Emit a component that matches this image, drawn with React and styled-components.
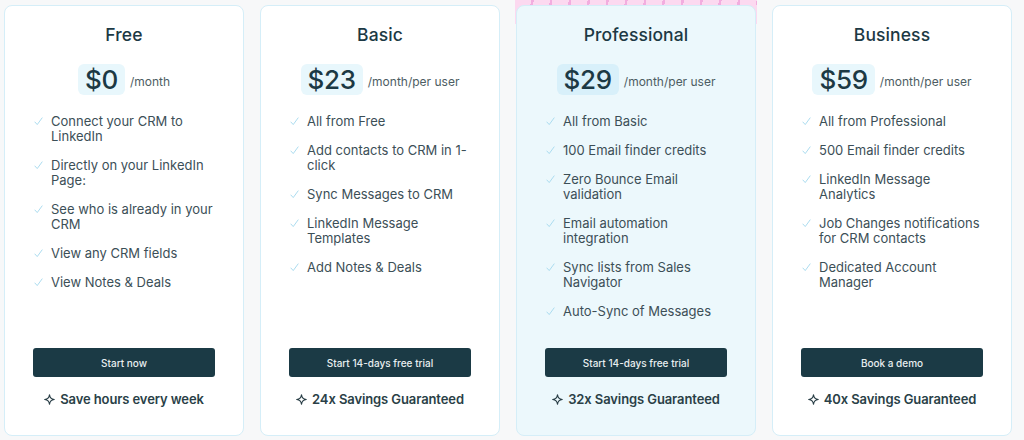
import React from 'react';
import styled, { createGlobalStyle, css } from 'styled-components';

const GlobalStyle = createGlobalStyle`
  html, body {
    margin: 0;
    padding: 0;
    background: #f7f8f9;
    font-family: Inter, "Noto Sans", sans-serif;
    -webkit-font-smoothing: antialiased;
  }
`;

const Plans = styled.section`
  display: grid;
  grid-template-columns: repeat(4, 240px);
  gap: 16px;
  padding: 0 0 0 4px;
  height: 440px;
  box-sizing: border-box;
`;

const Column = styled.div`
  position: relative;
  padding: 5px 0 4px;
  display: flex;

  ${({ $featured }) =>
    $featured &&
    css`
      &::before {
        content: '';
        position: absolute;
        top: 0;
        left: -1px;
        right: -1px;
        height: 24px;
        background:
          repeating-linear-gradient(
            100deg,
            transparent 0 16px,
            #f2addf 16px 18.5px
          ) 0 0 / 100% 5px no-repeat,
          #fcd9f0;
      }
    `}
`;

const Card = styled.div`
  position: relative;
  flex: 1;
  display: flex;
  flex-direction: column;
  padding: 17px 28px 26px;
  background: ${({ $featured }) => ($featured ? '#ecf8fc' : '#ffffff')};
  border: 1px solid #d5eef8;
  border-radius: 8px;
  box-sizing: border-box;
`;

const Title = styled.h2`
  margin: 0;
  text-align: center;
  font-size: 17.5px;
  line-height: 24px;
  font-weight: 500;
  color: #1c3944;
  letter-spacing: 0.1px;
`;

const PriceRow = styled.div`
  display: flex;
  justify-content: center;
  align-items: flex-end;
  gap: 5px;
  margin-top: 17px;
`;

const Amount = styled.span`
  display: inline-flex;
  align-items: center;
  height: 31px;
  padding: 0 7px;
  border-radius: 6px;
  background: ${({ $featured }) => ($featured ? '#d8f0fa' : '#e8f7fc')};
  font-size: 26px;
  font-weight: 500;
  color: #1c3944;
  letter-spacing: -0.3px;
`;

const Period = styled.span`
  font-size: 12px;
  line-height: 15px;
  color: #4d5d63;
  margin-bottom: 6px;
`;

const Features = styled.ul`
  list-style: none;
  margin: 19px 0 0;
  padding: 0 0 0 1px;
  display: flex;
  flex-direction: column;
  gap: 14px;
`;

const Feature = styled.li`
  display: flex;
  gap: 8px;
  font-size: 13px;
  line-height: 15px;
  color: #3c4f57;

  svg {
    flex: none;
    margin-top: 3px;
  }
`;

const Footer = styled.div`
  margin-top: auto;
  display: flex;
  flex-direction: column;
  align-items: center;
  gap: 12px;
`;

const Button = styled.button`
  width: 100%;
  height: 29px;
  border: none;
  border-radius: 3px;
  background: #1b3a45;
  color: #e8eef0;
  font-family: Inter, "Noto Sans", sans-serif;
  font-size: 10px;
  font-weight: 500;
  cursor: pointer;
`;

const Perk = styled.div`
  display: flex;
  align-items: center;
  gap: 5px;
  font-size: 13px;
  line-height: 20px;
  font-weight: 600;
  color: #2a3f47;
  letter-spacing: -0.1px;
`;

const Check = () => (
  <svg width="9" height="9" viewBox="0 0 10 10" fill="none">
    <path d="M1 5.6 L3.6 8.4 L9 1" stroke="#aadcef" strokeWidth="1.1" strokeLinecap="round" strokeLinejoin="round" />
  </svg>
);

const Sparkle = () => (
  <svg width="11" height="11" viewBox="0 0 12 12" fill="none">
    <path
      d="M6 0.8 C6.4 4.2 7.8 5.6 11.2 6 C7.8 6.4 6.4 7.8 6 11.2 C5.6 7.8 4.2 6.4 0.8 6 C4.2 5.6 5.6 4.2 6 0.8 Z"
      stroke="#2a3f47"
      strokeWidth="1.3"
      strokeLinejoin="round"
    />
  </svg>
);

const plans = [
  {
    name: 'Free',
    price: '$0',
    period: '/month',
    features: [
      'Connect your CRM to LinkedIn',
      'Directly on your LinkedIn Page:',
      'See who is already in your CRM',
      'View any CRM fields',
      'View Notes & Deals',
    ],
    cta: 'Start now',
    perk: 'Save hours every week',
  },
  {
    name: 'Basic',
    price: '$23',
    period: '/month/per user',
    features: [
      'All from Free',
      'Add contacts to CRM in 1-click',
      'Sync Messages to CRM',
      'LinkedIn Message Templates',
      'Add Notes & Deals',
    ],
    cta: 'Start 14-days free trial',
    perk: '24x Savings Guaranteed',
  },
  {
    name: 'Professional',
    price: '$29',
    period: '/month/per user',
    featured: true,
    features: [
      'All from Basic',
      '100 Email finder credits',
      'Zero Bounce Email validation',
      'Email automation integration',
      'Sync lists from Sales Navigator',
      'Auto-Sync of Messages',
    ],
    cta: 'Start 14-days free trial',
    perk: '32x Savings Guaranteed',
  },
  {
    name: 'Business',
    price: '$59',
    period: '/month/per user',
    features: [
      'All from Professional',
      '500 Email finder credits',
      'LinkedIn Message Analytics',
      'Job Changes notifications for CRM contacts',
      'Dedicated Account Manager',
    ],
    cta: 'Book a demo',
    perk: '40x Savings Guaranteed',
  },
];

export default function App() {
  return (
    <>
      <GlobalStyle />
      <Plans>
        {plans.map((plan) => (
          <Column key={plan.name} $featured={plan.featured}>
            <Card $featured={plan.featured}>
              <Title>{plan.name}</Title>
              <PriceRow>
                <Amount $featured={plan.featured}>{plan.price}</Amount>
                <Period>{plan.period}</Period>
              </PriceRow>
              <Features>
                {plan.features.map((f) => (
                  <Feature key={f}>
                    <Check />
                    <span>{f}</span>
                  </Feature>
                ))}
              </Features>
              <Footer>
                <Button>{plan.cta}</Button>
                <Perk>
                  <Sparkle />
                  {plan.perk}
                </Perk>
              </Footer>
            </Card>
          </Column>
        ))}
      </Plans>
    </>
  );
}
